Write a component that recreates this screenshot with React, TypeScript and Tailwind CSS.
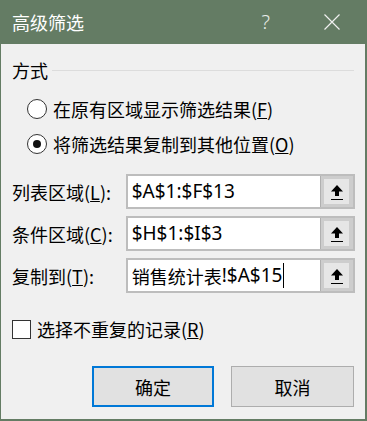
import React from "react";

const cjk = { fontFamily: '"Noto Sans CJK SC", "Noto Sans", sans-serif' };
const mixed = { fontFamily: '"Noto Sans", "Noto Sans CJK SC", sans-serif' };

function UpIcon() {
  return (
    <svg width="14" height="18" viewBox="0 0 14 18">
      <path d="M7 2 L13 8.5 L9 8.5 L9 13 L5 13 L5 8.5 L1 8.5 Z" fill="#000" />
      <rect x="1" y="16" width="12" height="1" fill="#000" />
    </svg>
  );
}

function Field({ label, value, prefix, caret }: { label: React.ReactNode; value: string; prefix?: string; caret?: boolean }) {
  return (
    <div className="flex items-center h-[35px]">
      <div className="w-[114px] text-[18px] text-black leading-none" style={cjk}>
        {label}
      </div>
      <div className="flex h-[35px] w-[230px] border-2 border-[#bdbdbd] bg-white">
        <div className="flex-1 flex items-center pl-[4px] text-[19px] text-black leading-none" style={mixed}>
          {prefix && <span className="text-[18px]" style={cjk}>{prefix}</span>}
          <span>{value}</span>
          {caret && <span className="inline-block w-px h-[25px] bg-black ml-[1px]" />}
        </div>
        <div className="w-[33px] h-full bg-[#cdcdcd] border-l border-[#b0b0b0] pt-[3px] pb-[3px] pl-[3px] pr-[4px]">
          <div className="w-full h-full bg-[#e6e6e6] flex items-center justify-center">
            <UpIcon />
          </div>
        </div>
      </div>
    </div>
  );
}

export default function App() {
  return (
    <div className="w-[367px] h-[421px] bg-[#647c64] flex flex-col select-none" style={cjk}>
      <div className="h-[44px] flex items-center pl-[12px] text-white">
        <span className="text-[18px] leading-none">高级筛选</span>
        <span className="ml-auto text-[20px] leading-none text-[#e8ece8] mr-[54px]" style={{ fontFamily: '"Noto Sans", sans-serif', fontWeight: 300 }}>?</span>
        <svg width="16" height="16" viewBox="0 0 16 16" className="mr-[27px]">
          <path d="M0.5 0.5 L15.5 15.5 M15.5 0.5 L0.5 15.5" stroke="#f0f0f0" strokeWidth="1.2" />
        </svg>
      </div>
      <div className="flex-1 ml-[1px] mr-[2px] mb-[2px] bg-[#f0f0f0] flex flex-col pl-[11px] pr-[10px]">
        <div className="mt-[14px] h-[24px] flex items-center">
          <span className="text-[18px] leading-none text-black">方式</span>
          <div className="flex-1 h-px bg-[#dcdcdc] ml-[4px] mr-[1px]" />
        </div>
        <div className="h-[35px] flex items-center pl-[15px] mt-[9px]">
          <div className="w-[20px] h-[20px] rounded-full border border-[#333] bg-white" />
          <span className="ml-[6px] text-[18px] leading-none text-black">在原有区域显示筛选结果(<u>F</u>)</span>
        </div>
        <div className="h-[35px] flex items-center pl-[15px]">
          <div className="w-[20px] h-[20px] rounded-full border border-[#333] bg-white flex items-center justify-center">
            <div className="w-[8px] h-[8px] rounded-full bg-[#111]" />
          </div>
          <span className="ml-[6px] text-[18px] leading-none text-black">将筛选结果复制到其他位置(<u>O</u>)</span>
        </div>
        <div className="mt-[13px] flex flex-col gap-[7px]">
          <Field label={<>列表区域(<u>L</u>):</>} value="$A$1:$F$13" />
          <Field label={<>条件区域(<u>C</u>):</>} value="$H$1:$I$3" />
          <Field label={<>复制到(<u>T</u>):</>} prefix="销售统计表" value="!$A$15" caret />
        </div>
        <div className="mt-[24px] h-[24px] flex items-center">
          <div className="w-[19px] h-[19px] border border-[#333] bg-white" />
          <span className="ml-[6px] text-[18px] leading-none text-black">选择不重复的记录(<u>R</u>)</span>
        </div>
        <div className="mt-[25px] flex pl-[80px] gap-[17px]">
          <div className="w-[122px] h-[41px] border-2 border-[#0078d7] bg-[#e1e1e1] flex items-center justify-center text-[18px] text-black leading-none">确定</div>
          <div className="w-[123px] h-[41px] border border-[#adadad] bg-[#e1e1e1] flex items-center justify-center text-[18px] text-black leading-none">取消</div>
        </div>
      </div>
    </div>
  );
}
